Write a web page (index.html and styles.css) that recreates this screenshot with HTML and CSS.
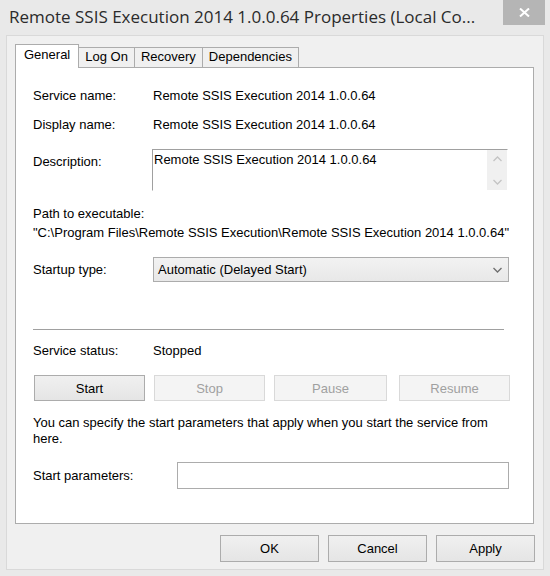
FILE: index.html
```html
<!DOCTYPE html>
<html lang="en">
<head>
    <meta charset="UTF-8">
    <title>Remote SSIS Execution 2014 1.0.0.64 Properties</title>
    <link rel="stylesheet" href="styles.css">
</head>
<body>
    <div class="titlebar">
        <div class="title">Remote SSIS Execution 2014 1.0.0.64 Properties (Local Co...</div>
        <div class="close-btn">
            <svg width="11" height="9" viewBox="0 0 11 9">
                <path d="M1 0.5 L10 8.5 M10 0.5 L1 8.5" stroke="#fff" stroke-width="2"/>
            </svg>
        </div>
    </div>

    <div class="client">
        <!-- Tab strip -->
        <div class="tabs">
            <div class="tab active">General</div>
            <div class="tab">Log On</div>
            <div class="tab">Recovery</div>
            <div class="tab">Dependencies</div>
        </div>

        <div class="panel">
            <div class="field">
                <div class="field-label">Service name:</div>
                <div>Remote SSIS Execution 2014 1.0.0.64</div>
            </div>
            <div class="field gap-13">
                <div class="field-label">Display name:</div>
                <div>Remote SSIS Execution 2014 1.0.0.64</div>
            </div>
            <div class="field top gap-16">
                <div class="field-label desc-label">Description:</div>
                <div class="desc-box">
                    <div class="desc-text">Remote SSIS Execution 2014 1.0.0.64</div>
                    <div class="scroll">
                        <svg width="9" height="6" viewBox="0 0 9 6"><path d="M0.5 5 L4.5 1 L8.5 5" fill="none" stroke="#c4c4c4" stroke-width="1.3"/></svg>
                        <svg width="9" height="6" viewBox="0 0 9 6"><path d="M0.5 1 L4.5 5 L8.5 1" fill="none" stroke="#c4c4c4" stroke-width="1.3"/></svg>
                    </div>
                </div>
            </div>

            <div class="line gap-15">Path to executable:</div>
            <div class="line path gap-3">"C:\Program Files\Remote SSIS Execution\Remote SSIS Execution 2014 1.0.0.64"</div>

            <div class="field gap-16">
                <div class="field-label">Startup type:</div>
                <div class="combo">
                    <span>Automatic (Delayed Start)</span>
                    <svg width="9" height="6" viewBox="0 0 9 6"><path d="M0.5 1 L4.5 5 L8.5 1" fill="none" stroke="#6e6e6e" stroke-width="1.3"/></svg>
                </div>
            </div>

            <div class="separator"></div>

            <div class="field gap-13">
                <div class="field-label">Service status:</div>
                <div>Stopped</div>
            </div>

            <div class="service-buttons gap-16">
                <button class="btn">Start</button>
                <button class="btn" disabled>Stop</button>
                <button class="btn btn-wide" disabled>Pause</button>
                <button class="btn btn-last" disabled>Resume</button>
            </div>

            <p class="hint gap-14">You can specify the start parameters that apply when you start the service from here.</p>

            <div class="field gap-15">
                <div class="field-label params-label">Start parameters:</div>
                <div class="text-input"></div>
            </div>
        </div>

        <div class="dialog-buttons">
            <button class="btn">OK</button>
            <button class="btn">Cancel</button>
            <button class="btn">Apply</button>
        </div>
    </div>
</body>
</html>
```

FILE: styles.css
```css
/* Base */
* {
    margin: 0;
    padding: 0;
    box-sizing: border-box;
}

body {
    width: 550px;
    height: 576px;
    overflow: hidden;
    background: #e9e9e9;
    font-family: "Liberation Sans", Arial, sans-serif;
    font-size: 13px;
    line-height: 16px;
    color: #000;
}

/* Window title bar */
.titlebar {
    height: 35px;
    display: flex;
    align-items: flex-start;
}

.title {
    padding: 5px 0 0 9px;
    font-family: "Open Sans", sans-serif;
    font-size: 17px;
    line-height: 24px;
    color: #2b2b2b;
    white-space: nowrap;
}

.close-btn {
    margin-left: auto;
    margin-right: 5px;
    width: 42px;
    height: 25px;
    background: #b5b5b5;
    display: flex;
    align-items: center;
    justify-content: center;
}

/* Client area */
.client {
    margin: 0 6px;
    height: 535px;
    border: 1px solid #d9d9d9;
    background: #f0f0f0;
    padding: 8px 8px 0 8px;
}

/* Tabs */
.tabs {
    display: flex;
    align-items: flex-end;
    height: 23px;
}

.tab {
    height: 20px;
    padding: 0 6px;
    margin-left: -1px;
    line-height: 18px;
    border: 1px solid #acacac;
    border-bottom: none;
    background: #f0f0f0;
}

.tab.active {
    position: relative;
    z-index: 1;
    height: 24px;
    margin-left: 0;
    margin-bottom: -1px;
    padding: 0 8px;
    line-height: 20px;
    background: #fff;
}

.panel {
    width: 519px;
    height: 457px;
    border: 1px solid #acacac;
    background: #fff;
    padding: 20px 23px 0 17px;
}

/* Rows */
.field {
    display: flex;
    align-items: center;
}

.field.top {
    align-items: flex-start;
}

.field-label {
    width: 120px;
    flex: none;
}

.desc-label {
    padding-top: 5px;
    width: 119px;
}

.params-label {
    width: 144px;
}

.gap-3 { margin-top: 3px; }
.gap-13 { margin-top: 13px; }
.gap-14 { margin-top: 14px; }
.gap-15 { margin-top: 15px; }
.gap-16 { margin-top: 16px; }

.desc-box {
    width: 356px;
    height: 42px;
    display: flex;
    border: 1px solid #fff;
    border-top-color: #a0a0a0;
    border-left-color: #a0a0a0;
}

.desc-text {
    flex: 1;
    padding: 2px 0 0 1px;
}

.scroll {
    width: 20px;
    background: #f0f0f0;
    display: flex;
    flex-direction: column;
    align-items: center;
    justify-content: space-between;
    padding: 6px 0 5px;
}

.path {
    white-space: nowrap;
    overflow: hidden;
    width: 476px;
}

.combo {
    width: 356px;
    height: 25px;
    border: 1px solid #acacac;
    background: linear-gradient(#f2f2f2, #e8e8e8);
    display: flex;
    align-items: center;
    justify-content: space-between;
    padding: 0 6px 0 4px;
}

.separator {
    margin-top: 47px;
    width: 471px;
    height: 1px;
    background: #a0a0a0;
}

/* Buttons */
.btn {
    height: 26px;
    border: 1px solid #acacac;
    background: linear-gradient(#f0f0f0, #e5e5e5);
    font-family: "Liberation Sans", Arial, sans-serif;
    font-size: 13px;
    color: #000;
}

.btn:disabled {
    border-color: #d9d9d9;
    background: #f4f4f4;
    color: #a0a0a0;
}

.service-buttons {
    display: flex;
    gap: 9px;
    padding-left: 1px;
}

.service-buttons .btn {
    width: 111px;
}

.service-buttons .btn-wide {
    width: 113px;
}

.service-buttons .btn-last {
    margin-left: auto;
}

.hint {
    width: 476px;
}

.text-input {
    width: 332px;
    height: 27px;
    border: 1px solid #acacac;
    background: #fff;
}

.dialog-buttons {
    margin-top: 11px;
    display: flex;
    justify-content: flex-end;
    gap: 9px;
    width: 520px;
}

.dialog-buttons .btn {
    width: 99px;
    height: 27px;
}
```
